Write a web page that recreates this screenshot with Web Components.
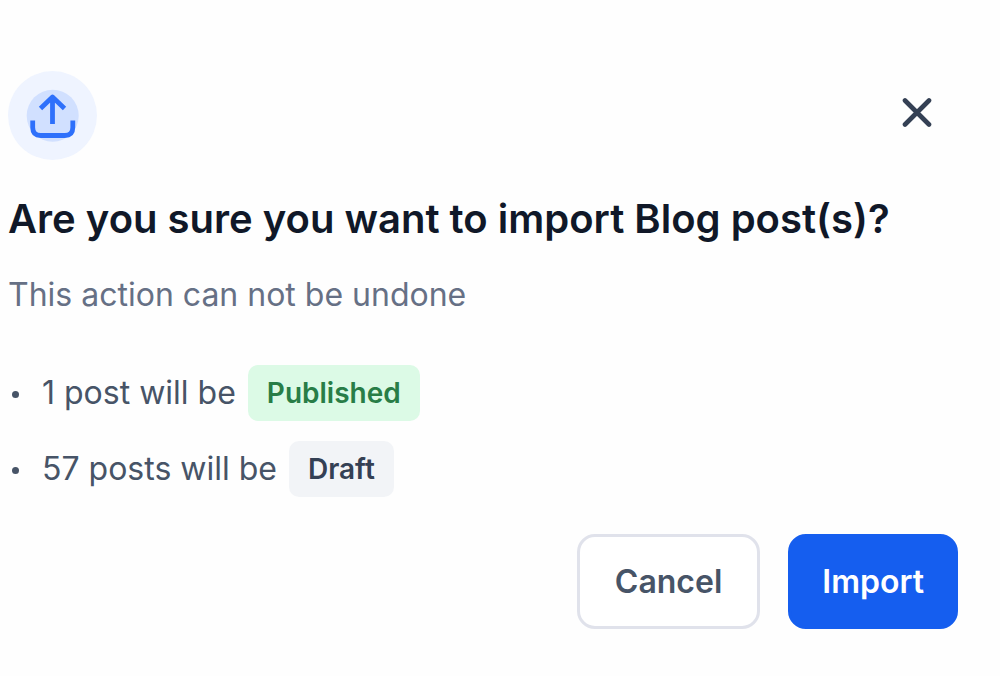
<!DOCTYPE html>
<html lang="en">
<head>
<meta charset="utf-8">
<meta name="viewport" content="width=device-width, initial-scale=1">
<title>Import Blog posts</title>
<style>
  body { margin: 0; background: #fefefe; font-family: Inter, "Liberation Sans", sans-serif; color: #344054; }
</style>
</head>
<body>
<confirm-dialog>
  <upload-icon slot="icon"></upload-icon>
  <close-button slot="close"></close-button>
  <span slot="title">Are you sure you want to import Blog post(s)?</span>
  <span slot="description">This action can not be undone</span>
  <summary-item>1 post will be <status-badge slot="badge" tone="success">Published</status-badge></summary-item>
  <summary-item>57 posts will be <status-badge slot="badge">Draft</status-badge></summary-item>
  <action-button slot="actions">Cancel</action-button>
  <action-button slot="actions" variant="primary">Import</action-button>
</confirm-dialog>

<template id="confirm-dialog">
  <style>
    :host { display: block; padding: 71px 42px 40px 8px; }
    header { display: flex; justify-content: space-between; align-items: flex-start; }
    h1 { margin: 33px 0 0; font-size: 40px; line-height: 52px; font-weight: 600; color: #101828; }
    p { margin: 28px 0 0; font-size: 32px; line-height: 44px; color: #667085; }
    .items { display: flex; flex-direction: column; gap: 20px; margin-top: 48px; }
    footer { display: flex; justify-content: flex-end; gap: 28px; margin-top: 37px; }
  </style>
  <section role="dialog" aria-labelledby="title" aria-describedby="description">
    <header><slot name="icon"></slot><slot name="close"></slot></header>
    <h1 id="title"><slot name="title"></slot></h1>
    <p id="description"><slot name="description"></slot></p>
    <div class="items" role="list"><slot></slot></div>
    <footer><slot name="actions"></slot></footer>
  </section>
</template>

<template id="upload-icon">
  <style>
    :host { display: block; width: 89px; height: 89px; }
    svg { display: block; }
  </style>
  <svg width="89" height="89" viewBox="0 0 89 89" fill="none" aria-hidden="true">
    <circle cx="44.5" cy="44.5" r="44.5" fill="#eff4ff"/>
    <circle cx="44.7" cy="44.7" r="26" fill="#d1e0ff"/>
    <g stroke="#2e70fb" stroke-width="4.8" stroke-linejoin="round">
      <path d="M44.5 53V26.500M32.500 37.500L44.500 26L56.500 37.500"/>
      <path d="M24.700 49.500V56.500Q24.700 64.500 32.700 64.500H56.800Q64.800 64.500 64.800 56.500V49.500"/>
    </g>
  </svg>
</template>

<template id="close-button">
  <style>
    :host { display: block; }
    button { display: grid; place-items: center; width: 84px; height: 84px; margin: 0; padding: 0; border: 0; border-radius: 16px; background: transparent; color: #344054; cursor: pointer; }
  </style>
  <button type="button" aria-label="Close">
    <svg width="32" height="32" viewBox="0 0 32 32" fill="none" stroke="currentColor" stroke-width="4.6" stroke-linecap="round" aria-hidden="true"><path d="M5 3.500L29 27.500M29 3.500L5 27.500"/></svg>
  </button>
</template>

<template id="summary-item">
  <style>
    :host { display: flex; align-items: center; font-size: 32px; line-height: 56px; }
    .dot { width: 7px; height: 7px; margin: 3px 23px 0 4px; border-radius: 50%; background: #475467; }
    .text { margin-right: 12px; color: #475467; }
  </style>
  <span class="dot"></span><span class="text"><slot></slot></span><slot name="badge"></slot>
</template>

<template id="status-badge">
  <style>
    :host { display: block; padding: 0 19px; border-radius: 10px; background: #f2f4f7; color: #344054; font-size: 28px; line-height: 56px; font-weight: 600; }
    :host([tone="success"]) { background: #dcfae6; color: #287d47; }
  </style>
  <slot></slot>
</template>

<template id="action-button">
  <style>
    :host { display: block; }
    button { display: block; margin: 0; padding: 0 35px; border: 3px solid #e0e2eb; border-radius: 18px; background: #fff; color: #475467; font: inherit; font-size: 32px; line-height: 89px; font-weight: 600; cursor: pointer; }
    :host([variant="primary"]) button { padding: 0 31px; border-color: #155eef; background: #155eef; color: #fff; }
  </style>
  <button type="button"><slot></slot></button>
</template>

<script>
  class TemplateElement extends HTMLElement {
    constructor() {
      super();
      const template = document.getElementById(this.localName);
      this.attachShadow({ mode: "open" }).append(template.content.cloneNode(true));
    }
  }
  class ConfirmDialog extends TemplateElement {}
  class UploadIcon extends TemplateElement {}
  class CloseButton extends TemplateElement {}
  class SummaryItem extends TemplateElement {
    connectedCallback() { this.setAttribute("role", "listitem"); }
  }
  class StatusBadge extends TemplateElement {}
  class ActionButton extends TemplateElement {}
  customElements.define("confirm-dialog", ConfirmDialog);
  customElements.define("upload-icon", UploadIcon);
  customElements.define("close-button", CloseButton);
  customElements.define("summary-item", SummaryItem);
  customElements.define("status-badge", StatusBadge);
  customElements.define("action-button", ActionButton);
</script>
</body>
</html>
